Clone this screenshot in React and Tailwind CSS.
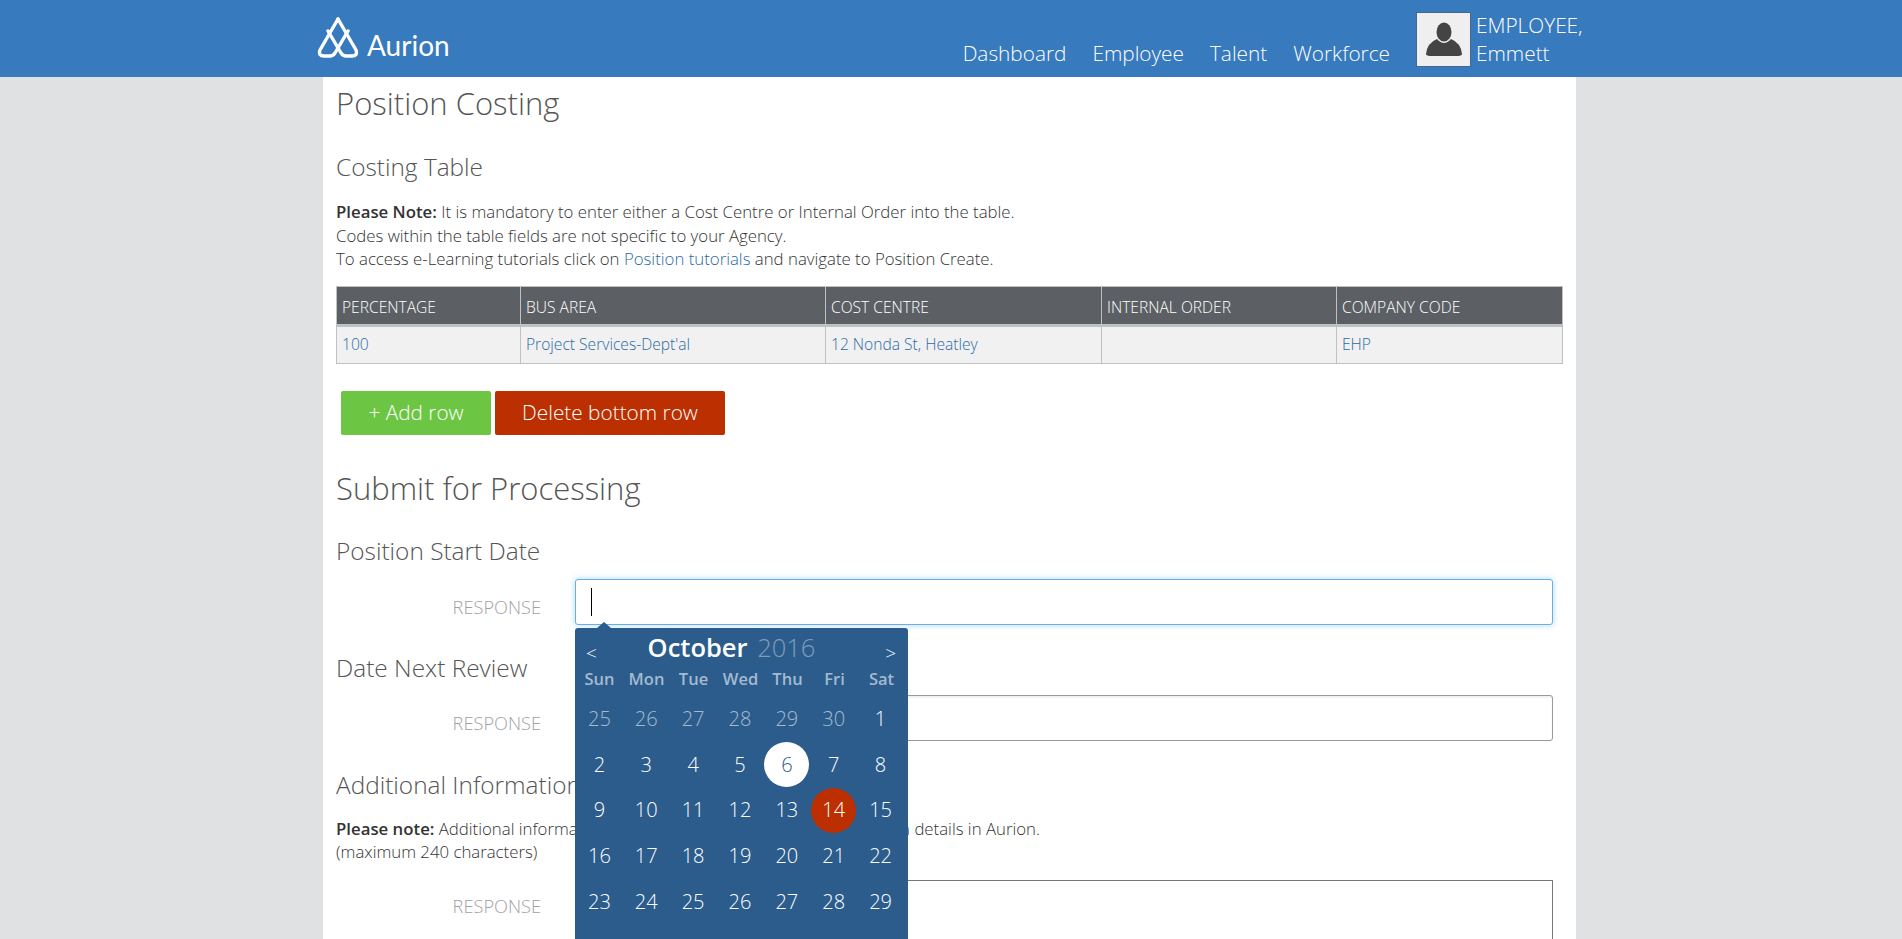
const days = [
  [25, 26, 27, 28, 29, 30, 1],
  [2, 3, 4, 5, 6, 7, 8],
  [9, 10, 11, 12, 13, 14, 15],
  [16, 17, 18, 19, 20, 21, 22],
  [23, 24, 25, 26, 27, 28, 29],
];

function Logo() {
  return (
    <svg width="42" height="42" viewBox="0 0 42 42" fill="none" stroke="white" strokeWidth="3.4" strokeLinejoin="round" strokeLinecap="round">
      <path d="M21 2 L39 33 Q41 39 35 39 L29 39 Q26 39 24 36 L11 14" />
      <path d="M21 2 L3 33 Q1 39 7 39 L13 39 Q16 39 18 36 L31 14" />
    </svg>
  );
}

function Avatar() {
  return (
    <div className="w-[55px] h-[55px] shrink-0 bg-[#f0eff0] border border-[#46688c] flex items-center justify-center">
      <svg width="36" height="36" viewBox="0 0 36 36" fill="#444444">
        <ellipse cx="18" cy="10" rx="7.5" ry="9.5" />
        <path d="M11 17 Q18 25 25 17 Q35 21 36 32 Q36 34 30 34 L6 34 Q0 34 0 32 Q1 21 11 17 Z" />
      </svg>
    </div>
  );
}

function Response({ children }) {
  return <div className="w-[205px] pt-[10px] text-right text-[18.2px] leading-[24px] text-[#9fa1a3] shrink-0 uppercase">{children}</div>;
}

function Calendar() {
  return (
    <div className="absolute left-[575px] top-[628px] w-[333px] h-[330px] bg-[#2b5c8c] rounded-[3px] text-white">
      <div className="absolute -top-[6px] left-[22px] w-0 h-0 border-l-[7px] border-r-[7px] border-b-[6px] border-l-transparent border-r-transparent border-b-[#2b5c8c]" />
      <div className="relative h-[39px] flex items-center justify-center">
        <span className="absolute left-[11px] top-[13px] text-[19px] leading-[24px]">&lt;</span>
        <span className="absolute right-[12px] top-[13px] text-[19px] leading-[24px]">&gt;</span>
        <div className="pb-[2px] pr-[20px] text-[25.5px] leading-[34px]">
          <span className="font-semibold">October</span>{" "}
          <span className="ml-[3px] text-[#7f9cb9]">2016</span>
        </div>
      </div>
      <div className="ml-[1px] w-[329px] grid grid-cols-7 h-[23px] items-center text-[16.5px] leading-[20px] font-semibold text-[#a4bad0] text-center">
        {["Sun", "Mon", "Tue", "Wed", "Thu", "Fri", "Sat"].map((d) => (
          <div key={d}>{d}</div>
        ))}
      </div>
      <div className="ml-[1px] w-[328px] pt-[6px]">
        {days.map((row, r) => (
          <div key={r} className="grid grid-cols-7 h-[45.7px] text-[20px] text-center">
            {row.map((d, c) => {
              const muted = r === 0 && c < 6;
              const today = r === 1 && c === 4;
              const sel = r === 2 && c === 5;
              return (
                <div key={c} className="flex items-center justify-center">
                  <span
                    className={
                      today
                        ? "w-[45px] h-[45px] rounded-full flex items-center justify-center bg-white text-[#2b5c8c]"
                        : sel
                          ? "w-[45px] h-[45px] rounded-full flex items-center justify-center bg-[#bb2f00]"
                          : muted
                            ? "text-[#a4bad0]"
                            : ""
                    }
                  >
                    {d}
                  </span>
                </div>
              );
            })}
          </div>
        ))}
      </div>
    </div>
  );
}

export default function App() {
  return (
    <div className="relative h-[939px] overflow-hidden bg-[#dfe1e3] text-[#444444] font-light" style={{ fontFamily: '"Open Sans", sans-serif' }}>
      <header className="h-[77px] bg-[#377abd]">
        <div className="w-[1284px] mx-auto pl-[8px] h-full flex items-end text-white">
          <div className="flex items-end gap-[8px] pb-[18px]">
            <Logo />
            <span className="text-[28px] leading-[30px] font-normal -mb-[1px]" style={{ fontFamily: '"Lato", sans-serif' }}>Aurion</span>
          </div>
          <nav className="ml-auto flex items-end gap-[26px] text-[20.8px] leading-[30px] pb-[9px]">
            <span>Dashboard</span>
            <span>Employee</span>
            <span>Talent</span>
            <span>Workforce</span>
          </nav>
          <div className="ml-[26px] flex items-start gap-[5px] self-start pt-[12px] w-[177px]">
            <Avatar />
            <div className="text-[20.8px] leading-[28px] -mt-[1px]">EMPLOYEE,<br />Emmett</div>
          </div>
        </div>
      </header>
      <main className="w-[1253px] ml-[323px] bg-white h-[862px] px-[13px] overflow-hidden">
        <h1 className="text-[31px] leading-[44px] pt-[4px] h-[56px] text-[#555555]">Position Costing</h1>
        <h2 className="mt-[17px] text-[24.4px] leading-[34px] text-[#555555]">Costing Table</h2>
        <div className="mt-[16px] text-[16.8px] leading-[23.5px] text-[#333333]">
          <p><b className="font-semibold">Please Note:</b> It is mandatory to enter either a Cost Centre or Internal Order into the table.</p>
          <p>Codes within the table fields are not specific to your Agency.</p>
          <p>To access e-Learning tutorials click on <a className="text-[#2b6aa5]">Position tutorials</a> and navigate to Position Create.</p>
        </div>
        <table className="mt-[15px] w-[1227px] table-fixed border-collapse text-[15.6px]">
          <colgroup>
            <col className="w-[184px]" /><col className="w-[305px]" /><col className="w-[276px]" /><col className="w-[235px]" /><col />
          </colgroup>
          <thead>
            <tr className="bg-[#5c6064] text-white h-[39px]">
              {["PERCENTAGE", "BUS AREA", "COST CENTRE", "INTERNAL ORDER", "COMPANY CODE"].map((h) => (
                <th key={h} className="border border-b-[3px] border-[#bfc1c3] text-left font-light px-[5px] pt-[6px]">{h}</th>
              ))}
            </tr>
          </thead>
          <tbody>
            <tr className="bg-[#f1f1f1] text-[#2b6aa5] h-[38px]">
              {["100", "Project Services-Dept'al", "12 Nonda St, Heatley", "", "EHP"].map((c, i) => (
                <td key={i} className="border border-[#bfc1c3] px-[5px]">{c}</td>
              ))}
            </tr>
          </tbody>
        </table>
        <div className="mt-[27px] ml-[5px] flex gap-[4px] text-[20.8px] text-white">
          <button className="w-[150px] h-[44px] bg-[#6cc644] rounded-[2px] font-light">+ Add row</button>
          <button className="w-[230px] h-[44px] bg-[#bb2f00] rounded-[2px] font-light">Delete bottom row</button>
        </div>
        <h1 className="mt-[31px] text-[31px] leading-[44px] text-[#555555]">Submit for Processing</h1>
        <h2 className="mt-[24px] text-[24.4px] leading-[34px] text-[#555555]">Position Start Date</h2>
        <div className="mt-[11px] flex items-center">
          <Response>Response</Response>
          <div className="ml-[34px] w-[978px] h-[46px] border border-[#66afe9] rounded-[3px] bg-white shadow-[0_0_6px_rgba(102,175,233,0.5)] flex items-center pl-[15px]">
            <div className="w-px h-[28px] bg-black" />
          </div>
        </div>
        <h2 className="mt-[26px] text-[24.4px] leading-[34px] text-[#555555]">Date Next Review</h2>
        <div className="mt-[10px] flex items-center">
          <Response>Response</Response>
          <div className="ml-[34px] w-[978px] h-[46px] border border-[#999999] rounded-[3px] bg-white shadow-[inset_0_2px_2px_rgba(0,0,0,0.06)]" />
        </div>
        <h2 className="mt-[27px] text-[24.4px] leading-[34px] text-[#555555]">Additional Information</h2>
        <div className="mt-[15px] text-[16.8px] leading-[23.5px] text-[#333333]">
          <p><b className="font-semibold">Please note:</b> Additional information is to be used to record suitable position details in Aurion.</p>
          <p>(maximum 240 characters)</p>
        </div>
        <div className="mt-[16px] flex items-start">
          <Response><span className="block pt-[4px]">Response</span></Response>
          <div className="ml-[34px] w-[978px] h-[120px] border border-[#777777] bg-white" />
        </div>
      </main>
      <Calendar />
    </div>
  );
}
